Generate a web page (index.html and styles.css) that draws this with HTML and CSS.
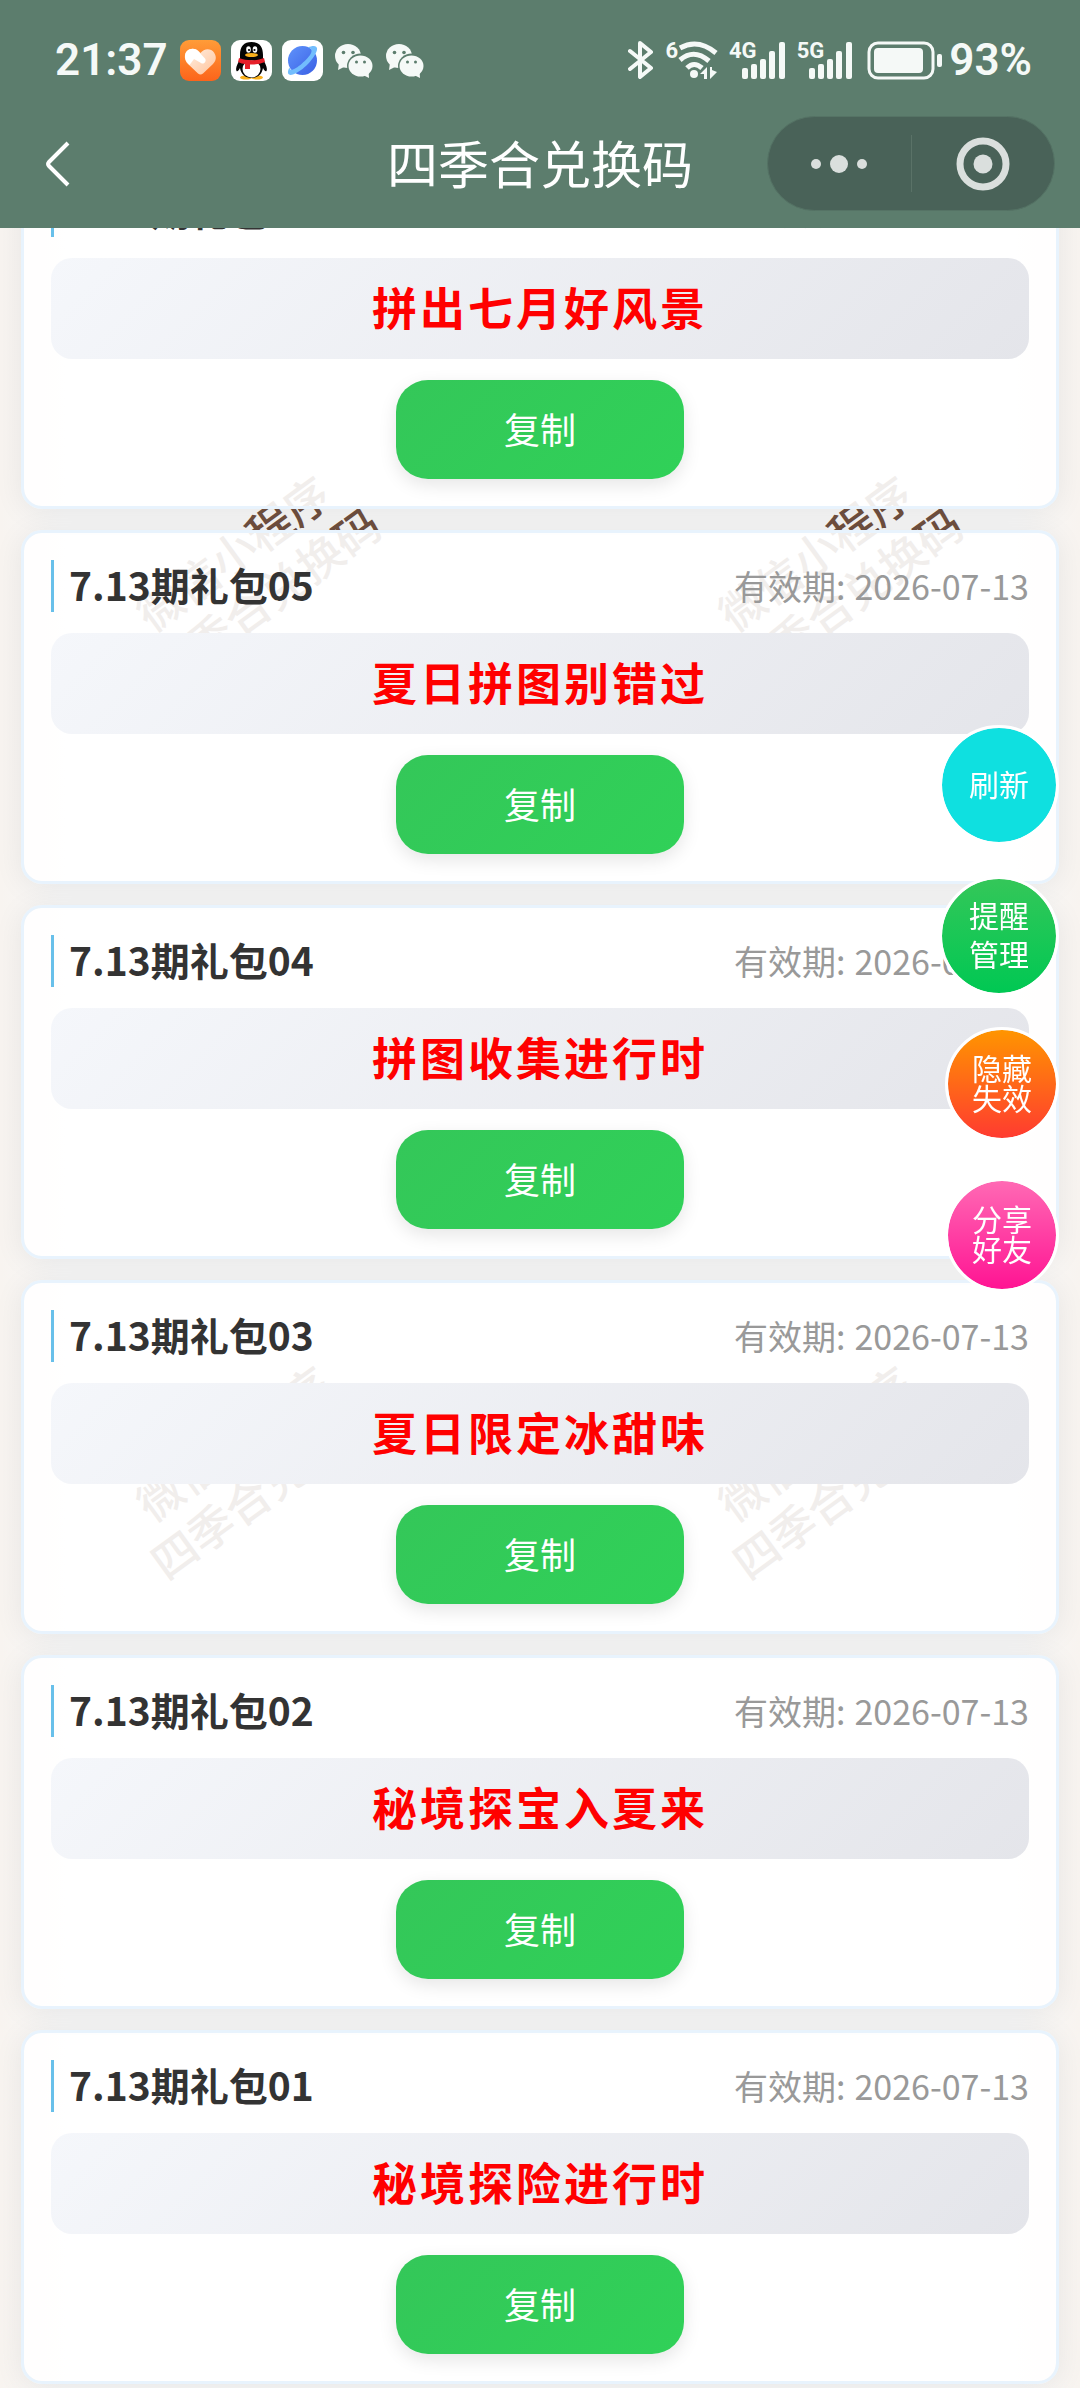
FILE: index.html
```html
<!DOCTYPE html>
<html lang="zh-CN">
<head>
    <meta charset="UTF-8">
    <meta name="viewport" content="width=device-width, initial-scale=1.0">
    <title>四季合兑换码</title>
    <link rel="stylesheet" href="styles.css">
</head>
<body>
    <header class="header">
        <div class="status-bar">
            <span class="status-text">21:37</span>
            <div class="app-icons">
                <svg width="41" height="41" viewBox="0 0 41 41">
                    <defs>
                        <linearGradient id="orange" x1="0" y1="0" x2="0" y2="1"><stop offset="0" stop-color="#ff9c38"/><stop offset="1" stop-color="#fc641b"/></linearGradient>
                        <linearGradient id="heart" x1="0" y1="0" x2="1" y2="1"><stop offset="0.3" stop-color="#ffe3cf"/><stop offset="1" stop-color="#ffc49c"/></linearGradient>
                    </defs>
                    <rect width="41" height="41" rx="9" fill="url(#orange)"/>
                    <path d="M20.500 13C24 8 31 8 34 12.500C37 17 36 21 33 24L23 33.500Q20.500 35.500 18 33.500L8 24C4 20 4 14 7 11C11 7.500 17 8 20.500 13Z" fill="url(#heart)"/>
                    <path d="M7 11C10 8 15 8 18 11L25 18.500C27 21 24 25 21 23L14 19L9.500 25C4 20 4 14 7 11Z" fill="#fff"/>
                </svg>
                <svg width="41" height="41" viewBox="0 0 41 41">
                    <rect width="41" height="41" rx="9" fill="#fff"/>
                    <ellipse cx="15" cy="37.500" rx="6" ry="2" fill="#fab01b"/>
                    <ellipse cx="26" cy="37.500" rx="6" ry="2" fill="#fab01b"/>
                    <path d="M9 15C9 6 13 2 20.500 2S32 6 32 15V19C34 23 37 28 35.500 31C34.500 32 33 30 32 28C31 34 27 38 20.500 38S10 34 9 28C8 30 6.500 32 5.500 31C4 28 7 23 9 19Z" fill="#050505"/>
                    <ellipse cx="20.500" cy="29" rx="9" ry="8.500" fill="#fff"/>
                    <path d="M8 18C16 21 25 21 33 18L34 22Q27 25 19 24.500V29H14V24Q11 24 7 22Z" fill="#e6202a"/>
                    <ellipse cx="17.500" cy="9.500" rx="2.300" ry="3.200" fill="#fff"/>
                    <ellipse cx="24" cy="9.500" rx="2.300" ry="3.200" fill="#fff"/>
                    <circle cx="18" cy="10" r="1.100"/>
                    <circle cx="23.500" cy="10" r="1.100"/>
                    <ellipse cx="20.500" cy="15" rx="6.500" ry="2" fill="#fab01b"/>
                </svg>
                <svg width="41" height="41" viewBox="0 0 41 41">
                    <defs>
                        <linearGradient id="planet" x1="0" y1="0" x2="1" y2="1"><stop offset="0" stop-color="#5f93fb"/><stop offset="1" stop-color="#3a5fe4"/></linearGradient>
                    </defs>
                    <rect width="41" height="41" rx="9" fill="#fff"/>
                    <circle cx="20.500" cy="20.500" r="14.500" fill="url(#planet)"/>
                    <path d="M26 7.500C31 5 36 5.500 35 10C33 18 21 31 11 34.500C6 36 4.500 33 7.500 27.500C8 32 13 29.500 20 23.500C27 17.500 34 9.500 26 7.500Z" fill="#72bdfd"/>
                </svg>
                <svg width="41" height="41" viewBox="0 0 41 41">
                    <g fill="#f5f9f7">
                        <ellipse cx="15" cy="16" rx="13" ry="12"/>
                        <path d="M6 23L5 30L13 26Z"/>
                    </g>
                    <ellipse cx="27.500" cy="26" rx="13.500" ry="12.500" fill="#5c7d6d"/>
                    <g fill="#f5f9f7">
                        <ellipse cx="27.500" cy="26" rx="12" ry="10.500"/>
                        <path d="M28 34L36 38L35.500 31Z"/>
                    </g>
                    <g fill="#5c7d6d">
                        <circle cx="10.500" cy="12.500" r="1.800"/><circle cx="20" cy="12.500" r="1.800"/>
                        <circle cx="23.500" cy="22" r="1.500"/><circle cx="31.500" cy="22" r="1.500"/>
                    </g>
                </svg>
                <svg width="41" height="41" viewBox="0 0 41 41">
                    <g fill="#f5f9f7">
                        <ellipse cx="15" cy="16" rx="13" ry="12"/>
                        <path d="M6 23L5 30L13 26Z"/>
                    </g>
                    <ellipse cx="27.500" cy="26" rx="13.500" ry="12.500" fill="#5c7d6d"/>
                    <g fill="#f5f9f7">
                        <ellipse cx="27.500" cy="26" rx="12" ry="10.500"/>
                        <path d="M28 34L36 38L35.500 31Z"/>
                    </g>
                    <g fill="#5c7d6d">
                        <circle cx="10.500" cy="12.500" r="1.800"/><circle cx="20" cy="12.500" r="1.800"/>
                        <circle cx="23.500" cy="22" r="1.500"/><circle cx="31.500" cy="22" r="1.500"/>
                    </g>
                </svg>
            </div>
            <div class="system-icons">
                <svg width="26" height="40" viewBox="0 0 26 40">
                    <path d="M2 11L23 28L12 37V3L23 12L2 29" fill="none" stroke="#f5f9f7" stroke-width="4" stroke-linejoin="round" stroke-linecap="round"/>
                </svg>
                <div class="network">
                    <span class="network-label">6</span>
                    <svg width="40" height="40" viewBox="0 0 40 40">
                        <g fill="none" stroke="#f5f9f7" stroke-width="5">
                            <path d="M2 8Q20 -2 38 13"/>
                            <path d="M2 20Q16 8 31 21"/>
                            <path d="M9 28Q16 21 24 28"/>
                        </g>
                        <circle cx="16" cy="34" r="4" fill="#f5f9f7"/>
                        <path d="M29 39H26V34H22L29 27ZM32 39V27H34V30L39 32Z" fill="#f5f9f7"/>
                    </svg>
                </div>
                <div class="network">
                    <span class="network-label">4G</span>
                    <svg class="signal" width="44" height="40" viewBox="0 0 44 40">
                        <g fill="#f5f9f7">
                            <rect x="0" y="28" width="6" height="11" rx="2"/><rect x="9" y="24" width="6" height="15" rx="2"/><rect x="18" y="19" width="6" height="20" rx="2"/><rect x="27" y="11" width="6" height="28" rx="2"/><rect x="37" y="2" width="6" height="37" rx="2"/>
                        </g>
                    </svg>
                </div>
                <div class="network">
                    <span class="network-label">5G</span>
                    <svg class="signal" width="44" height="40" viewBox="0 0 44 40">
                        <g fill="#f5f9f7">
                            <rect x="0" y="28" width="6" height="11" rx="2"/><rect x="9" y="24" width="6" height="15" rx="2"/><rect x="18" y="19" width="6" height="20" rx="2"/><rect x="27" y="11" width="6" height="28" rx="2"/><rect x="37" y="2" width="6" height="37" rx="2"/>
                        </g>
                    </svg>
                </div>
                <svg class="battery" width="76" height="40" viewBox="0 0 76 40">
                    <rect x="2" y="3" width="64" height="35" rx="9" fill="none" stroke="#f5f9f7" stroke-width="3"/>
                    <rect x="7" y="8" width="49" height="25" rx="4" fill="#f5f9f7"/>
                    <rect x="70" y="14" width="5" height="13" rx="2" fill="#f5f9f7"/>
                </svg>
                <span class="status-text">93%</span>
            </div>
        </div>
        <nav class="nav-bar">
            <a href="#" class="back" aria-label="返回">
                <svg width="26" height="48" viewBox="0 0 26 48">
                    <path d="M23 3L4 22Q2 24 4 26L23 45" fill="none" stroke="#fff" stroke-width="4"/>
                </svg>
            </a>
            <h1>四季合兑换码</h1>
            <div class="capsule">
                <button type="button" aria-label="更多">
                    <svg width="58" height="20" viewBox="0 0 58 20" fill="#dadfdd"><circle cx="6" cy="10" r="5"/><circle cx="29" cy="10" r="9"/><circle cx="52" cy="10" r="5"/></svg>
                </button>
                <button type="button" aria-label="关闭">
                    <svg width="54" height="54" viewBox="0 0 54 54"><circle cx="27" cy="27" r="23" fill="none" stroke="#dadfdd" stroke-width="7"/><circle cx="27" cy="27" r="9.500" fill="#dadfdd"/></svg>
                </button>
            </div>
        </nav>
    </header>

    <main class="content">
        <div class="watermarks" aria-hidden="true">
            <p>微信小程序<br>四季合兑换码</p>
            <p>微信小程序<br>四季合兑换码</p>
            <p>微信小程序<br>四季合兑换码</p>
            <p>微信小程序<br>四季合兑换码</p>
        </div>

        <div class="code-list">
            <section class="card">
                <div class="card-header">
                    <h2>7.13期礼包06</h2>
                    <p class="expire">有效期:<time>2026-07-13</time></p>
                </div>
                <div class="code">拼出七月好风景</div>
                <button type="button" class="copy">复制</button>
            </section>
            <section class="card">
                <div class="card-header">
                    <h2>7.13期礼包05</h2>
                    <p class="expire">有效期:<time>2026-07-13</time></p>
                </div>
                <div class="code">夏日拼图别错过</div>
                <button type="button" class="copy">复制</button>
            </section>
            <section class="card">
                <div class="card-header">
                    <h2>7.13期礼包04</h2>
                    <p class="expire">有效期:<time>2026-07-13</time></p>
                </div>
                <div class="code">拼图收集进行时</div>
                <button type="button" class="copy">复制</button>
            </section>
            <section class="card">
                <div class="card-header">
                    <h2>7.13期礼包03</h2>
                    <p class="expire">有效期:<time>2026-07-13</time></p>
                </div>
                <div class="code">夏日限定冰甜味</div>
                <button type="button" class="copy">复制</button>
            </section>
            <section class="card">
                <div class="card-header">
                    <h2>7.13期礼包02</h2>
                    <p class="expire">有效期:<time>2026-07-13</time></p>
                </div>
                <div class="code">秘境探宝入夏来</div>
                <button type="button" class="copy">复制</button>
            </section>
            <section class="card">
                <div class="card-header">
                    <h2>7.13期礼包01</h2>
                    <p class="expire">有效期:<time>2026-07-13</time></p>
                </div>
                <div class="code">秘境探险进行时</div>
                <button type="button" class="copy">复制</button>
            </section>
        </div>
    </main>

    <div class="float-buttons">
        <button type="button" class="float-btn refresh">刷新</button>
        <button type="button" class="float-btn remind">提醒<br>管理</button>
        <button type="button" class="float-btn small hide">隐藏<br>失效</button>
        <button type="button" class="float-btn small share">分享<br>好友</button>
    </div>
</body>
</html>
```
FILE: styles.css
```css
* {
    box-sizing: border-box;
}
body {
    margin: 0;
    min-height: 100vh;
    font-family: "Noto Sans CJK SC", sans-serif;
    background: linear-gradient(90deg, #f8f4f0, #f7f7f7 6%, #f7f7f7 94%, #f8f4f0);
}
h1, h2, p {
    margin: 0;
}
svg {
    display: block;
    flex: none;
}
button {
    padding: 0;
    border: none;
    font-family: inherit;
    color: #fff;
    cursor: pointer;
}

/* header */
.header {
    position: relative;
    z-index: 2;
    background: #5c7d6d;
}
.status-bar {
    display: flex;
    align-items: center;
    height: 99px;
    padding: 21px 48px 0 55px;
}
.status-text {
    font: 600 44px/48px Roboto, sans-serif;
    color: #f5f9f7;
}
.app-icons {
    display: flex;
    gap: 10px;
    margin-left: 12px;
}
.system-icons {
    display: flex;
    align-items: center;
    gap: 11px;
    margin-left: auto;
}
.network {
    display: flex;
    align-items: flex-start;
}
.network-label {
    font: 700 22px/22px Roboto, sans-serif;
    color: #f5f9f7;
}
.signal {
    margin-left: -15px;
}
.battery {
    margin: 0 -5px 0 3px;
}
.nav-bar {
    display: grid;
    grid-template-columns: 1fr auto 1fr;
    align-items: center;
    height: 129px;
    padding: 0 25px;
}
.back {
    justify-self: start;
    margin-left: 20px;
}
.nav-bar h1 {
    padding-bottom: 3px;
    font-size: 51px;
    font-weight: 400;
    line-height: 60px;
    color: #fff;
}
.capsule {
    display: flex;
    align-items: center;
    justify-self: end;
    width: 288px;
    height: 95px;
    border: 1px solid #557365;
    border-radius: 48px;
    background: #496258;
}
.capsule button {
    display: flex;
    align-items: center;
    justify-content: center;
    flex: 1;
    height: 57px;
    background: none;
}
.capsule button + button {
    border-left: 1px solid #5a7267;
}

/* code cards */
.content {
    position: relative;
    overflow: hidden;
}
.watermarks {
    position: absolute;
    top: -99px;
    left: -43px;
    display: grid;
    grid-template-columns: 582px 582px;
    grid-auto-rows: 890px;
    place-items: center;
}
.watermarks p {
    font-size: 45px;
    font-weight: 500;
    line-height: 55px;
    text-align: center;
    white-space: nowrap;
    color: #70503f;
    transform: rotate(-36deg);
}
.code-list {
    position: relative;
    display: flex;
    flex-direction: column;
    gap: 21px;
    margin-top: -73px;
    padding: 0 21px 4px;
}
.card {
    padding: 27px;
    border: 3px solid #e8f3fd;
    border-radius: 21px;
    background: rgba(255, 255, 255, 0.9);
    background-clip: padding-box;
    box-shadow: 0 3px 30px rgba(0, 0, 0, 0.07);
}
.card-header {
    display: flex;
    align-items: center;
    justify-content: space-between;
}
.card-header h2 {
    padding: 0 0 4px 15px;
    border-left: 3px solid #68c0ea;
    font-size: 39px;
    font-weight: 700;
    line-height: 48px;
    color: #333;
}
.expire {
    font-size: 34px;
    line-height: 52px;
    color: #999;
}
.expire time {
    margin-left: 9px;
}
.code {
    margin: 21px 0;
    padding: 18px 20px 22px;
    border-radius: 21px;
    background: linear-gradient(135deg, #f5f7fb, #e4e5ea);
    font-size: 45px;
    font-weight: 700;
    line-height: 61px;
    letter-spacing: 3px;
    text-align: center;
    color: #f00;
}
.copy {
    display: block;
    width: 288px;
    height: 99px;
    margin: 0 auto;
    padding-bottom: 4px;
    border-radius: 32px;
    background: linear-gradient(135deg, #34c759, #30d158);
    box-shadow: 0 6px 18px rgba(0, 0, 0, 0.1);
    font-size: 36px;
}

/* floating buttons */
.float-buttons {
    position: fixed;
    top: 725px;
    right: 21px;
    z-index: 3;
    display: grid;
    grid-auto-rows: 120px;
    row-gap: 31px;
    justify-items: end;
}
.float-btn {
    width: 120px;
    height: 120px;
    padding-bottom: 4px;
    border: 3px solid #fff;
    border-radius: 50%;
    background-clip: padding-box;
    font-size: 30px;
    line-height: 39px;
}
.small {
    width: 114px;
    height: 114px;
    line-height: 30px;
}
.refresh {
    background-color: #0fe0e0;
}
.remind {
    background-image: linear-gradient(#34c759, #00c853);
}
.hide {
    background-image: linear-gradient(#ff9500, #ff3b30);
}
.share {
    background-image: linear-gradient(#ff69b4, #ff1493);
}
```
